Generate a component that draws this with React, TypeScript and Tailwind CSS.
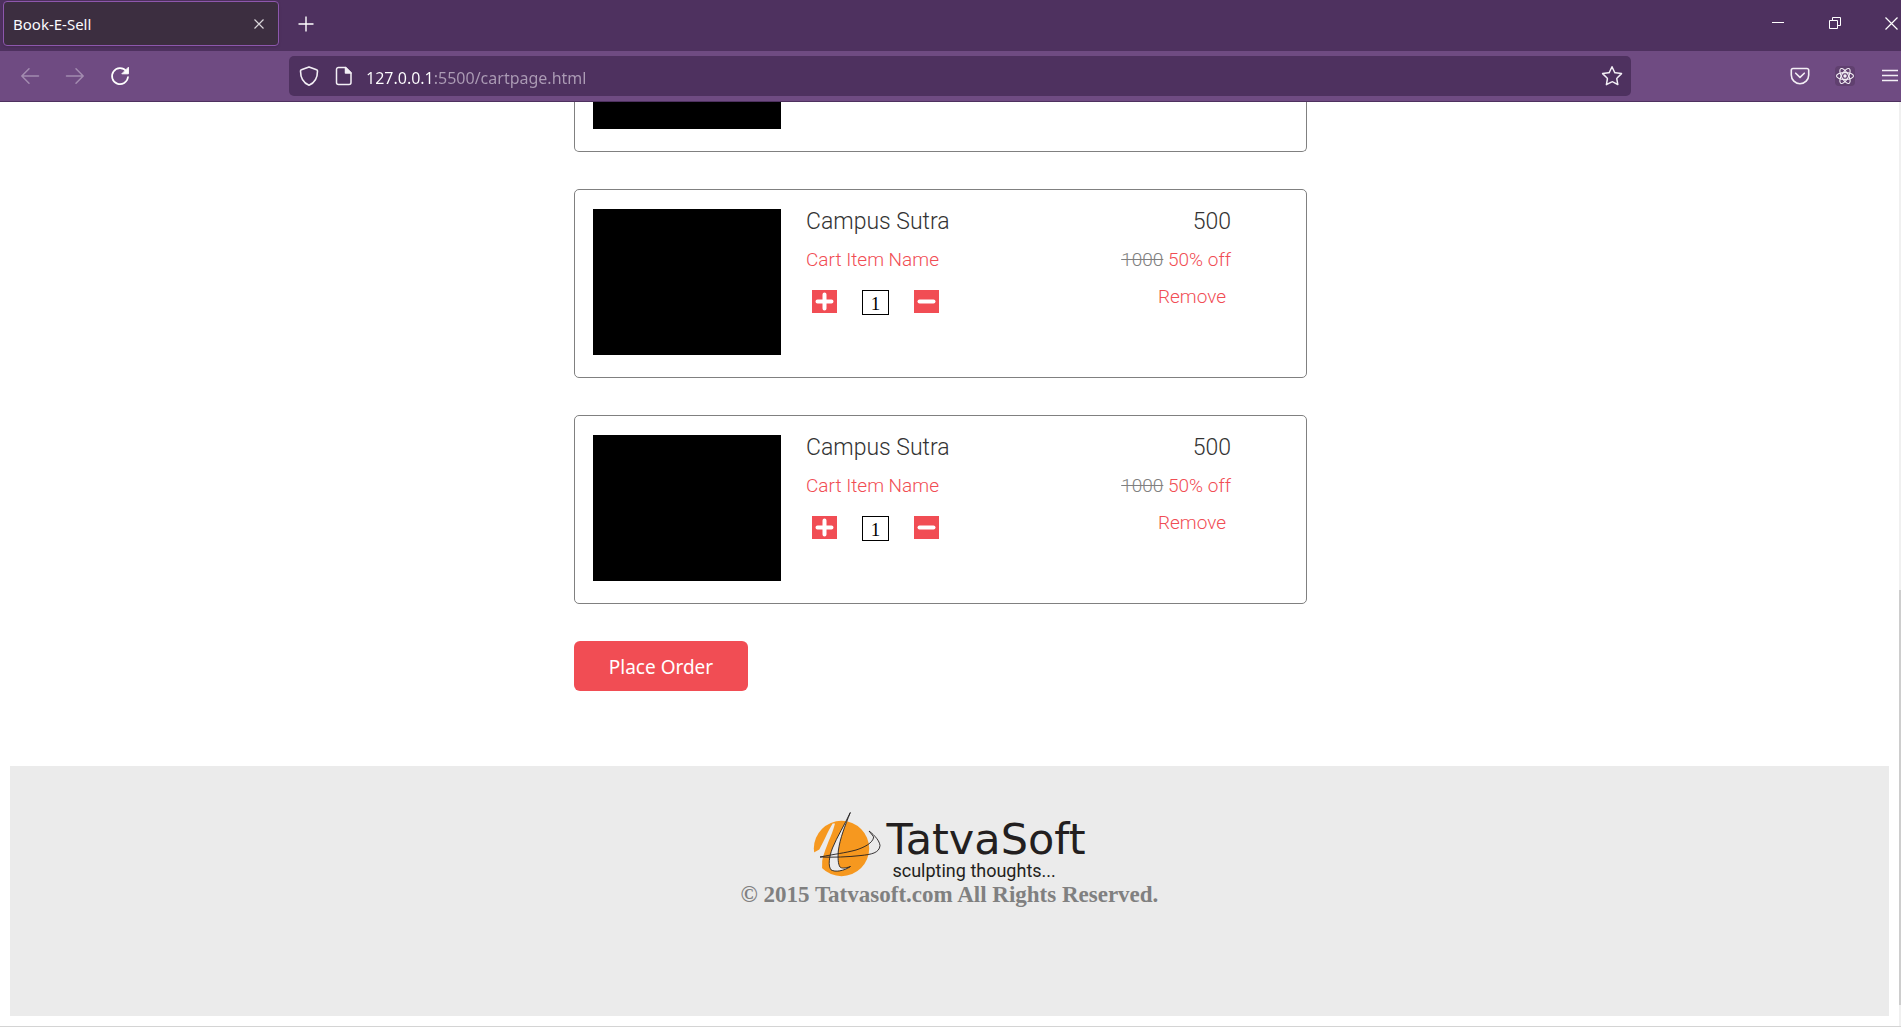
import React from 'react';

function WindowTabs() {
  return (
    <div className="flex h-[51px] items-start bg-[#4e315f] text-white">
      <div className="ml-[3px] mt-px flex h-[45px] w-[276px] items-center justify-between rounded border border-[#8d57ad] bg-[#3c2e40] pl-[9px] pr-[13px] shadow">
        <span className="text-[15px] leading-5 text-[#fbfbfe]">Book-E-Sell</span>
        <button aria-label="Close tab" className="text-[#d8d5d9]">
          <svg width="12" height="12" viewBox="0 0 12 12" fill="none" stroke="currentColor" strokeWidth="1.2">
            <path d="M1.5 1.5l9 9M10.5 1.5l-9 9" />
          </svg>
        </button>
      </div>
      <button aria-label="New tab" className="ml-[17px] mt-3 flex h-6 w-5 items-center justify-center">
        <svg width="16" height="16" viewBox="0 0 16 16" fill="none" stroke="currentColor" strokeWidth="1.4">
          <path d="M8 .5v15M.5 8h15" />
        </svg>
      </button>
      <div className="ml-auto flex h-[46px] items-center">
        <button aria-label="Minimize" className="flex w-[57px] justify-center">
          <svg width="12" height="12" viewBox="0 0 12 12" fill="none" stroke="currentColor">
            <path d="M0 5.5h12" />
          </svg>
        </button>
        <button aria-label="Restore" className="flex w-[57px] justify-center">
          <svg width="12" height="12" viewBox="0 0 12 12" fill="none" stroke="currentColor">
            <path d="M.5 3.5h8v8h-8zM3.5 3.5v-3h8v8h-3" />
          </svg>
        </button>
        <button aria-label="Close" className="ml-[22px] mr-[3px] flex justify-center">
          <svg width="13" height="13" viewBox="0 0 13 13" fill="none" stroke="currentColor" strokeWidth="1.2">
            <path d="M.5 .5l12 12M12.5 .5l-12 12" />
          </svg>
        </button>
      </div>
    </div>
  );
}

function Toolbar() {
  return (
    <div className="flex h-[51px] items-center border-b border-[#4e315f] bg-[#6f4b82] text-[#f3eff5]">
      <div className="flex w-[289px] items-center gap-[25px] pl-5">
        <button aria-label="Back" className="text-[#a38cb0]">
          <svg width="20" height="20" viewBox="0 0 20 20" fill="none" stroke="currentColor" strokeWidth="1.5" strokeLinecap="round" strokeLinejoin="round">
            <path d="M18.5 10H2M9 2.8L1.8 10 9 17.2" />
          </svg>
        </button>
        <button aria-label="Forward" className="text-[#a38cb0]">
          <svg width="20" height="20" viewBox="0 0 20 20" fill="none" stroke="currentColor" strokeWidth="1.5" strokeLinecap="round" strokeLinejoin="round">
            <path d="M1.5 10H18M11 2.8L18.2 10 11 17.2" />
          </svg>
        </button>
        <button aria-label="Reload" className="text-white">
          <svg width="20" height="20" viewBox="0 0 20 20" fill="none" stroke="currentColor" strokeWidth="1.7" strokeLinecap="round">
            <path d="M16.2 5A8 8 0 1 0 18 11" />
            <path d="M18.4 1.6v6.2h-6.2z" fill="currentColor" strokeWidth="1" strokeLinejoin="round" />
          </svg>
        </button>
      </div>
      <div className="flex h-10 flex-1 items-center rounded-[5px] bg-[#4e315f] pl-[10px] pr-2">
        <svg width="20" height="20" viewBox="0 0 20 20" fill="none" stroke="currentColor" strokeWidth="1.6" strokeLinejoin="round">
          <path d="M10 .9l7.6 2.9c.6.2.9.6.9 1.2C18.5 12 15.5 17 10 19.2 4.5 17 1.5 12 1.5 5c0-.6.3-1 .9-1.2z" />
        </svg>
        <svg className="ml-4" width="18" height="20" viewBox="0 0 18 20" fill="none" stroke="currentColor" strokeWidth="1.5" strokeLinejoin="round">
          <path d="M3.5 1.5h7l5.5 5.5v9.5a2 2 0 0 1-2 2H3.5a2 2 0 0 1-2-2v-13a2 2 0 0 1 2-2z" />
          <path d="M10.5 1.5v5.5H16z" fill="currentColor" />
        </svg>
        <input
          aria-label="Address"
          defaultValue="127.0.0.1:5500/cartpage.html"
          className="ml-[13px] h-10 flex-1 bg-[linear-gradient(90deg,#ffffff_67px,#ac9cb5_67px)] bg-clip-text pt-[3px] text-[16px] leading-6 text-transparent outline-none"
        />
        <button aria-label="Bookmark this page">
          <svg width="22" height="22" viewBox="0 0 22 22" fill="none" stroke="currentColor" strokeWidth="1.5" strokeLinejoin="round">
            <path d="M11 1.8L13.6 7.3a1 1 0 0 0 .8.5l6.1.8-4.4 4.4a1 1 0 0 0-.3.9l1 5.7-5-2.7a1 1 0 0 0-1 0l-5.4 2.7 1-5.7a1 1 0 0 0-.3-.9L1.6 8.600l6-.8a1 1 0 0 0 .8-.5z" />
          </svg>
        </button>
      </div>
      <div className="flex w-[270px] items-center justify-end pr-[3px]">
        <button aria-label="Save to Pocket">
          <svg width="20" height="18" viewBox="0 0 20 18" fill="none" stroke="currentColor" strokeWidth="1.6" strokeLinecap="round" strokeLinejoin="round">
            <path d="M3 1.5h14a1.7 1.7 0 0 1 1.7 1.7V8a8.7 8.7 0 0 1-17.4 0V3.2A1.7 1.7 0 0 1 3 1.5z" />
            <path d="M5.7 6.2L10 10.4l4.3-4.2" />
          </svg>
        </button>
        <button aria-label="React developer tools" className="ml-[25px] rounded-sm bg-[#60406f]">
          <svg width="20" height="20" viewBox="0 0 20 20" fill="none" stroke="currentColor" strokeWidth="1.1">
            <ellipse cx="10" cy="10" rx="8.5" ry="3.4" />
            <ellipse cx="10" cy="10" rx="8.5" ry="3.4" transform="rotate(60 10 10)" />
            <ellipse cx="10" cy="10" rx="8.5" ry="3.4" transform="rotate(120 10 10)" />
            <circle cx="10" cy="10" r="1.7" fill="currentColor" stroke="none" />
          </svg>
        </button>
        <button aria-label="Menu" className="ml-[27px]">
          <svg width="16" height="14" viewBox="0 0 16 14" fill="none" stroke="currentColor" strokeWidth="1.4">
            <path d="M0 1.5h16M0 6.5h16M0 11.5h16" />
          </svg>
        </button>
      </div>
    </div>
  );
}

function CartItem() {
  return (
    <article className="flex rounded-[5px] border border-[#808080] pb-[22px] pl-[18px] pr-[75px] pt-[19px] font-['Roboto'] font-light">
      <div className="h-[146px] w-[188px] shrink-0 bg-black" />
      <div className="ml-[25px] flex flex-col gap-3">
        <h2 className="text-[23px] leading-[26px] text-[#333333]">Campus Sutra</h2>
        <p className="text-[19px] leading-[25px] text-[#f14d54]">Cart Item Name</p>
        <div className="mt-[6px] flex items-start gap-[25px] pl-[6px]">
          <button aria-label="Increase quantity" className="h-[23px] w-[25px] bg-[#f14d54]">
            <svg width="25" height="23" viewBox="0 0 25 23" stroke="white" strokeWidth="4" strokeLinecap="round">
              <path d="M5.5 11.5h14M12.5 4.5v14" />
            </svg>
          </button>
          <output className="flex h-[25px] w-[27px] items-center justify-center border border-black pt-[3px] font-['Liberation_Serif'] text-[19px] font-normal leading-6 text-black">
            1
          </output>
          <button aria-label="Decrease quantity" className="h-[23px] w-[25px] bg-[#f14d54]">
            <svg width="25" height="23" viewBox="0 0 25 23" stroke="white" strokeWidth="4" strokeLinecap="round">
              <path d="M5.5 11.5h14" />
            </svg>
          </button>
        </div>
      </div>
      <div className="ml-auto flex flex-col items-end gap-3 text-[19px] leading-[25px] text-[#f14d54]">
        <p className="text-[23px] leading-[26px] text-[#333333]">500</p>
        <p>
          <s className="text-[#808080]">1000</s> 50% off
        </p>
        <button className="mr-[5px]">Remove</button>
      </div>
    </article>
  );
}

function Logo() {
  return (
    <div className="flex h-[72px] items-start text-[#231f20]">
      <svg width="68" height="68" viewBox="0 0 68 68" fill="none">
        <circle cx="28.5" cy="37.5" r="27.7" fill="#f6981f" />
        <path d="M0 42L6.3 38.5C10 32 15 20 19.7 12.5L22 12.5C20 20 18 25 15.7 30 13 37 10 45 9.2 50L9 63 0 63z" fill="#ebebeb" />
        <path d="M37.3 1.5C32 13 24 26 19.5 37 16 46 15 55 18 58.8 22 61.5 31 60 37.5 55.5 32 57.5 28.5 57.5 27 56 25 53 24.8 47 25.3 40 27 27 32 15 37.3 1.5z" fill="#ebebeb" stroke="#231f20" strokeWidth=".9" />
        <path d="M56 20C62 24.5 66.5 30 67 34.5 66.5 42 58 43.5 48 44.5 35 46 20 46.5 7 46 22 43 32 42 43 39 51 36.5 60 32 60.7 26" stroke="#231f20" strokeWidth=".9" />
        <path d="M56 20L60.7 26" stroke="#231f20" strokeWidth=".8" />
      </svg>
      <div className="ml-[5px] flex flex-col font-['DejaVu_Sans']">
        <span className="mt-[6px] text-[43px] leading-[44px]">TatvaSoft</span>
        <span className="ml-[6px] font-['Roboto'] text-[18px] leading-5">sculpting thoughts...</span>
      </div>
    </div>
  );
}

export default function App() {
  return (
    <div className="bg-white font-['Noto_Sans',sans-serif]">
      <header>
        <WindowTabs />
        <Toolbar />
      </header>
      <div className="flex border-b border-[#d4d4d4]">
        <div className="flex-1 pb-[10px]">
          <main className="pr-[18px]">
            <div className="mx-auto flex max-w-[733px] flex-col gap-[37px]">
              <div className="rounded-b-[5px] border border-t-0 border-[#808080] pb-[22px] pl-[18px]">
                <div className="h-[27px] w-[188px] bg-black" />
              </div>
              <CartItem />
              <CartItem />
              <button className="h-[50px] w-[174px] rounded-[6px] bg-[#f14d54] pt-[2px] text-[19px] leading-6 text-white">
                Place Order
              </button>
            </div>
          </main>
          <footer className="mx-[10px] mt-[75px] flex h-[250px] flex-col items-center bg-[#ebebeb] pt-[45px]">
            <Logo />
            <p className="font-['Liberation_Serif'] text-[23px] font-bold leading-6 text-[#808080]">
              © 2015 Tatvasoft.com All Rights Reserved.
            </p>
          </footer>
        </div>
        <div className="flex w-[2px] flex-col justify-end bg-[#f0f0f0] pb-[21px]">
          <div className="h-[46%] bg-[#cdcdcd]" />
        </div>
      </div>
    </div>
  );
}
